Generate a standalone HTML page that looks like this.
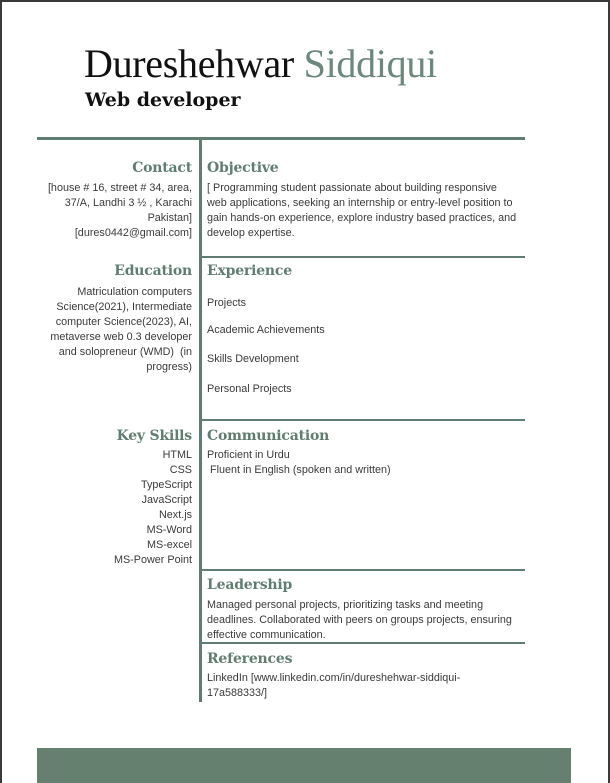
<!DOCTYPE html>
<html><head><meta charset="utf-8"><style>
*{margin:0;padding:0;box-sizing:border-box}
body{width:610px;height:783px;overflow:hidden;background:#fff;position:relative;font-family:"Liberation Sans",sans-serif;color:#3a3a3a}
.frame{position:absolute;left:0;top:0;width:610px;height:783px;border:2px solid #3a3a3a;border-bottom:none}
.a{position:absolute}
.serif{font-family:"DejaVu Serif","Liberation Serif",serif}
.h{font-family:"DejaVu Serif","Liberation Serif",serif;font-weight:bold;color:#5f7d70;font-size:14px;letter-spacing:-0.2px}
.t{font-size:10.8px;line-height:15px}
.r{text-align:right;right:418px}
.x{left:207px}
.hl{position:absolute;background:#5f7d70}
</style></head><body>
<div class="frame"></div>
<div class="a serif" style="left:84px;top:40px;font-size:40px;color:#111;letter-spacing:-0.3px;font-family:'Liberation Serif','DejaVu Serif',serif;white-space:nowrap">Dureshehwar <span style="color:#6a887c">Siddiqui</span></div>
<div class="a serif" style="left:85px;top:89px;font-size:19px;font-weight:bold;color:#111">Web developer</div>
<div class="hl" style="left:37px;top:137px;width:488px;height:3px"></div>
<div class="hl" style="left:199px;top:137px;width:3px;height:565px"></div>
<div class="hl" style="left:202px;top:256px;width:323px;height:2px"></div>
<div class="hl" style="left:202px;top:419px;width:323px;height:2px"></div>
<div class="hl" style="left:202px;top:569px;width:323px;height:2px"></div>
<div class="hl" style="left:202px;top:642px;width:323px;height:2px"></div>
<div class="hl" style="left:37px;top:748px;width:534px;height:35px;background:#66806f"></div>

<div class="a h r" style="top:160px">Contact</div>
<div class="a t r" style="top:181px">[house # 16, street # 34, area,<br>37/A, Landhi 3 ½ , Karachi<br>Pakistan]<br>[dures0442@gmail.com]</div>
<div class="a h x" style="top:160px">Objective</div>
<div class="a t x" style="top:181px;width:315px">[ Programming student passionate about building responsive<br>web applications, seeking an internship or entry-level position to gain hands-on experience, explore industry based practices, and develop expertise.</div>

<div class="a h r" style="top:263px">Education</div>
<div class="a t r" style="top:285px;width:150px">Matriculation computers Science(2021), Intermediate computer Science(2023), AI, metaverse web 0.3 developer and solopreneur (WMD)&nbsp; (in progress)</div>
<div class="a h x" style="top:263px">Experience</div>
<div class="a t x" style="top:296px">Projects</div>
<div class="a t x" style="top:323px">Academic Achievements</div>
<div class="a t x" style="top:352px">Skills Development</div>
<div class="a t x" style="top:382px">Personal Projects</div>

<div class="a h r" style="top:428px">Key Skills</div>
<div class="a t r" style="top:448px">HTML<br>CSS<br>TypeScript<br>JavaScript<br>Next.js<br>MS-Word<br>MS-excel<br>MS-Power Point</div>
<div class="a h x" style="top:428px">Communication</div>
<div class="a t x" style="top:448px">Proficient in Urdu<br>&nbsp;Fluent in English (spoken and written)</div>

<div class="a h x" style="top:577px">Leadership</div>
<div class="a t x" style="top:598px;width:315px">Managed personal projects, prioritizing tasks and meeting deadlines. Collaborated with peers on groups projects, ensuring effective communication.</div>
<div class="a h x" style="top:651px">References</div>
<div class="a t x" style="top:671px">LinkedIn [www.linkedin.com/in/dureshehwar-siddiqui-<br>17a588333/]</div>
</body></html>
